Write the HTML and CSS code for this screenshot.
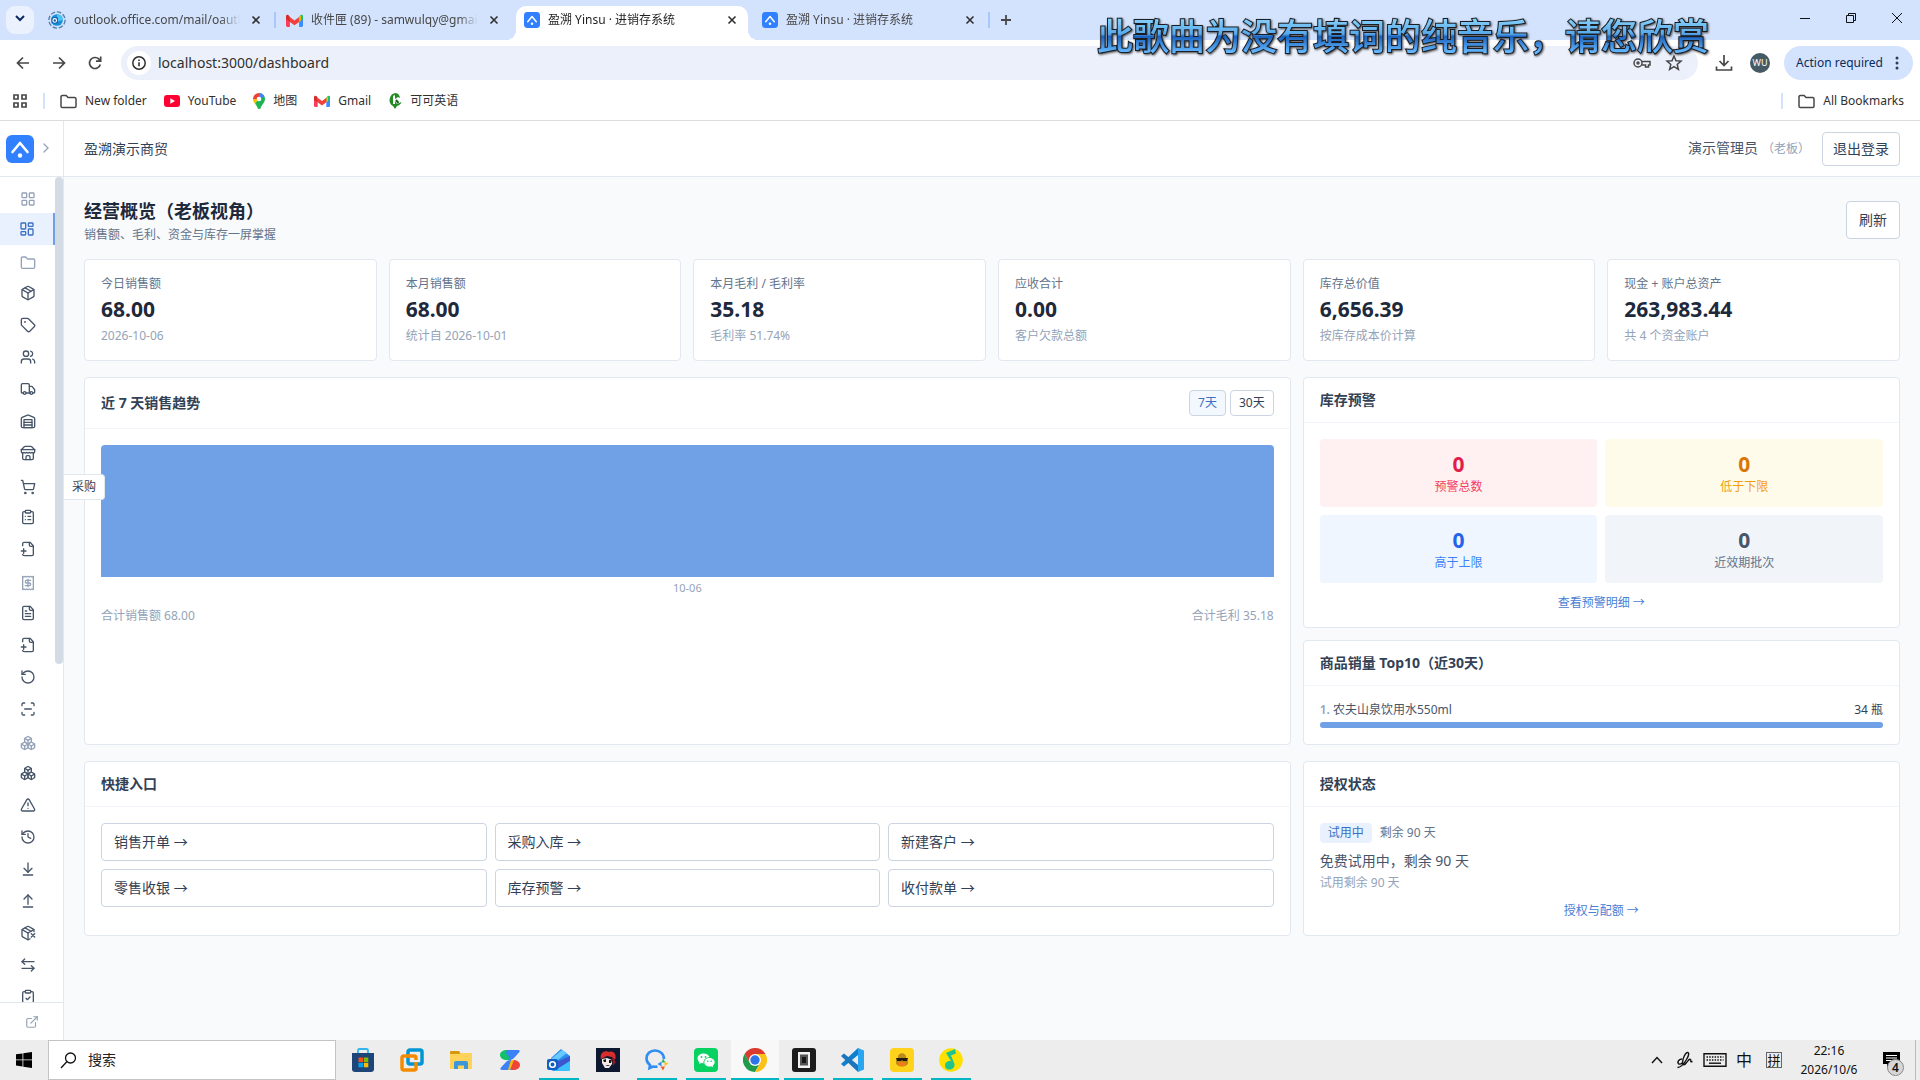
FILE: index.html
```html
<!DOCTYPE html>
<html lang="zh-CN">
<head>
  <meta charset="UTF-8">
  <meta name="viewport" content="width=device-width, initial-scale=1.0">
  <title>盈溯 Yinsu · 进销存系统</title>
  <link rel="stylesheet" href="styles.css">
</head>
<body>

  <!-- Icon sprite -->
  <svg width="0" height="0" class="sprite" aria-hidden="true">
    <defs>
      <linearGradient id="lyric-fill" x1="0" y1="0" x2="0" y2="1">
        <stop offset="0.2" stop-color="#86d2fb"/>
        <stop offset="0.5" stop-color="#58a8ea"/>
        <stop offset="0.55" stop-color="#1c62bd"/>
        <stop offset="0.85" stop-color="#64b8ff"/>
      </linearGradient>
      <symbol id="i-logo" viewBox="0 0 28 28"><rect width="28" height="28" rx="6" fill="#3080ff"/><path d="M6.5 17 14 8l7.5 9" fill="none" stroke="#fff" stroke-width="2.6" stroke-linecap="round" stroke-linejoin="round"/><circle cx="14" cy="20.5" r="2.2" fill="#fff"/></symbol>
      <symbol id="i-x" viewBox="0 0 16 16"><path d="M4.5 4.5l7 7M11.5 4.5l-7 7"/></symbol>
      <symbol id="i-gmail" viewBox="0 0 24 18"><path d="M2 18h3.5V7L0 3v13a2 2 0 0 0 2 2z" fill="#ff3b5c"/><path d="M18.5 18H22a2 2 0 0 0 2-2V3l-5.5 4z" fill="#3b8cff"/><path d="M24 3v4l-5.5 4V4l1.2-1.7C21.5 0 24 1 24 3z" fill="#19c26b"/><path d="M18.5 4v7l2.5-1.8V1.5z" fill="#fbbc04"/><path d="M5.5 11V4l6.5 4.9L18.5 4v7L12 15.8z" fill="#f2413a"/><path d="M0 3v4l5.5 4V4L4.3 2.3C2.5 0 0 1 0 3z" fill="#d42b2b"/></symbol>
      <symbol id="i-folder-o" viewBox="0 0 18 16"><path d="M1 13V3a1.5 1.5 0 0 1 1.5-1.5H6.5l2 2.2h7A1.5 1.5 0 0 1 17 5.2V13a1.5 1.5 0 0 1-1.5 1.5h-13A1.5 1.5 0 0 1 1 13z" fill="none" stroke="#474747" stroke-width="1.6"/></symbol>

      <symbol id="i-grid" viewBox="0 0 24 24"><rect x="3" y="3" width="7" height="7" rx="1"/><rect x="14" y="3" width="7" height="7" rx="1"/><rect x="14" y="14" width="7" height="7" rx="1"/><rect x="3" y="14" width="7" height="7" rx="1"/></symbol>
      <symbol id="i-dashboard" viewBox="0 0 24 24"><rect x="3" y="3" width="7" height="9" rx="1"/><rect x="14" y="3" width="7" height="5" rx="1"/><rect x="14" y="12" width="7" height="9" rx="1"/><rect x="3" y="16" width="7" height="5" rx="1"/></symbol>
      <symbol id="i-folder" viewBox="0 0 24 24"><path d="M20 20a2 2 0 0 0 2-2V8a2 2 0 0 0-2-2h-7.9a2 2 0 0 1-1.69-.9L9.6 3.9A2 2 0 0 0 7.93 3H4a2 2 0 0 0-2 2v13a2 2 0 0 0 2 2Z"/></symbol>
      <symbol id="i-package" viewBox="0 0 24 24"><path d="M11 21.73a2 2 0 0 0 2 0l7-4A2 2 0 0 0 21 16V8a2 2 0 0 0-1-1.73l-7-4a2 2 0 0 0-2 0l-7 4A2 2 0 0 0 3 8v8a2 2 0 0 0 1 1.73z"/><path d="M12 22V12"/><path d="m3.3 7 8.7 5 8.7-5"/><path d="m7.5 4.27 9 5.15"/></symbol>
      <symbol id="i-tag" viewBox="0 0 24 24"><path d="M12.586 2.586A2 2 0 0 0 11.172 2H4a2 2 0 0 0-2 2v7.172a2 2 0 0 0 .586 1.414l8.704 8.704a2.426 2.426 0 0 0 3.42 0l6.58-6.58a2.426 2.426 0 0 0 0-3.42z"/><circle cx="7.5" cy="7.5" r=".5"/></symbol>
      <symbol id="i-users" viewBox="0 0 24 24"><path d="M16 21v-2a4 4 0 0 0-4-4H6a4 4 0 0 0-4 4v2"/><circle cx="9" cy="7" r="4"/><path d="M22 21v-2a4 4 0 0 0-3-3.87"/><path d="M16 3.13a4 4 0 0 1 0 7.75"/></symbol>
      <symbol id="i-truck" viewBox="0 0 24 24"><path d="M14 18V6a2 2 0 0 0-2-2H4a2 2 0 0 0-2 2v11a1 1 0 0 0 1 1h2"/><path d="M15 18H9"/><path d="M19 18h2a1 1 0 0 0 1-1v-3.65a1 1 0 0 0-.22-.624l-3.48-4.35A1 1 0 0 0 17.52 8H14"/><circle cx="17" cy="18" r="2"/><circle cx="7" cy="18" r="2"/></symbol>
      <symbol id="i-warehouse" viewBox="0 0 24 24"><path d="M22 8.35V20a2 2 0 0 1-2 2H4a2 2 0 0 1-2-2V8.35A2 2 0 0 1 3.26 6.5l8-3.2a2 2 0 0 1 1.48 0l8 3.2A2 2 0 0 1 22 8.35Z"/><path d="M6 18h12"/><path d="M6 14h12"/><rect x="6" y="10" width="12" height="12"/></symbol>
      <symbol id="i-store" viewBox="0 0 24 24"><path d="m2 7 4.41-4.41A2 2 0 0 1 7.83 2h8.34a2 2 0 0 1 1.42.59L22 7"/><path d="M4 12v8a2 2 0 0 0 2 2h12a2 2 0 0 0 2-2v-8"/><path d="M15 22v-4a2 2 0 0 0-2-2h-2a2 2 0 0 0-2 2v4"/><path d="M2 7h20"/><path d="M22 7v3a2 2 0 0 1-2 2 2.7 2.7 0 0 1-1.59-.63.7.7 0 0 0-.82 0A2.7 2.7 0 0 1 16 12a2.7 2.7 0 0 1-1.59-.63.7.7 0 0 0-.82 0A2.7 2.7 0 0 1 12 12a2.7 2.7 0 0 1-1.59-.63.7.7 0 0 0-.82 0A2.7 2.7 0 0 1 8 12a2.7 2.7 0 0 1-1.59-.63.7.7 0 0 0-.82 0A2.7 2.7 0 0 1 4 12a2 2 0 0 1-2-2V7"/></symbol>
      <symbol id="i-cart" viewBox="0 0 24 24"><circle cx="8" cy="21" r="1"/><circle cx="19" cy="21" r="1"/><path d="M2.05 2.05h2l2.66 12.42a2 2 0 0 0 2 1.58h9.78a2 2 0 0 0 1.95-1.57l1.65-7.43H5.12"/></symbol>
      <symbol id="i-clip-list" viewBox="0 0 24 24"><rect x="8" y="2" width="8" height="4" rx="1"/><path d="M16 4h2a2 2 0 0 1 2 2v14a2 2 0 0 1-2 2H6a2 2 0 0 1-2-2V6a2 2 0 0 1 2-2h2"/><path d="M12 11h4"/><path d="M12 16h4"/><path d="M8 11h.01"/><path d="M8 16h.01"/></symbol>
      <symbol id="i-clip-check" viewBox="0 0 24 24"><rect x="8" y="2" width="8" height="4" rx="1"/><path d="M16 4h2a2 2 0 0 1 2 2v14a2 2 0 0 1-2 2H6a2 2 0 0 1-2-2V6a2 2 0 0 1 2-2h2"/><path d="m9 14 2 2 4-4"/></symbol>
      <symbol id="i-file-in" viewBox="0 0 24 24"><path d="M14 2v4a2 2 0 0 0 2 2h4"/><path d="M4 7V4a2 2 0 0 1 2-2h9l5 5v13a2 2 0 0 1-2 2H6a2 2 0 0 1-2-2"/><path d="M2 15h7"/><path d="M5.5 11.5v7"/></symbol>
      <symbol id="i-receipt" viewBox="0 0 24 24"><path d="M4 2v20l2-1 2 1 2-1 2 1 2-1 2 1 2-1 2 1V2l-2 1-2-1-2 1-2-1-2 1-2-1-2 1Z"/><path d="M16 8h-6a2 2 0 1 0 0 4h4a2 2 0 1 1 0 4H8"/><path d="M12 17.5v-11"/></symbol>
      <symbol id="i-file-text" viewBox="0 0 24 24"><path d="M15 2H6a2 2 0 0 0-2 2v16a2 2 0 0 0 2 2h12a2 2 0 0 0 2-2V7Z"/><path d="M14 2v4a2 2 0 0 0 2 2h4"/><path d="M10 9H8"/><path d="M16 13H8"/><path d="M16 17H8"/></symbol>
      <symbol id="i-rotate" viewBox="0 0 24 24"><path d="M3 12a9 9 0 1 0 9-9 9.75 9.75 0 0 0-6.74 2.74L3 8"/><path d="M3 3v5h5"/></symbol>
      <symbol id="i-scan" viewBox="0 0 24 24"><path d="M3 7V5a2 2 0 0 1 2-2h2"/><path d="M17 3h2a2 2 0 0 1 2 2v2"/><path d="M21 17v2a2 2 0 0 1-2 2h-2"/><path d="M7 21H5a2 2 0 0 1-2-2v-2"/><path d="M7 12h10"/></symbol>
      <symbol id="i-boxes" viewBox="0 0 24 24"><path d="M2.97 12.92A2 2 0 0 0 2 14.63v3.24a2 2 0 0 0 .97 1.71l3 1.8a2 2 0 0 0 2.06 0L12 19v-5.5l-5-3-4.03 2.42Z"/><path d="m7 16.5-4.74-2.85"/><path d="m7 16.5 5-3"/><path d="M7 16.5v5.17"/><path d="M12 13.5V19l3.97 2.38a2 2 0 0 0 2.06 0l3-1.8a2 2 0 0 0 .97-1.71v-3.24a2 2 0 0 0-.97-1.71L17 10.5l-5 3Z"/><path d="m17 16.5-5-3"/><path d="m17 16.5 4.74-2.85"/><path d="M17 16.5v5.17"/><path d="M7.97 4.42A2 2 0 0 0 7 6.13v4.37l5 3 5-3V6.13a2 2 0 0 0-.97-1.71l-3-1.8a2 2 0 0 0-2.06 0l-3 1.8Z"/><path d="M12 8 7.26 5.15"/><path d="m12 8 4.74-2.85"/><path d="M12 13.5V8"/></symbol>
      <symbol id="i-alert" viewBox="0 0 24 24"><path d="m21.73 18-8-14a2 2 0 0 0-3.48 0l-8 14A2 2 0 0 0 4 21h16a2 2 0 0 0 1.73-3"/><path d="M12 9v4"/><path d="M12 17h.01"/></symbol>
      <symbol id="i-history" viewBox="0 0 24 24"><path d="M3 12a9 9 0 1 0 9-9 9.75 9.75 0 0 0-6.74 2.74L3 8"/><path d="M3 3v5h5"/><path d="M12 7v5l4 2"/></symbol>
      <symbol id="i-down" viewBox="0 0 24 24"><path d="M12 17V3"/><path d="m6 11 6 6 6-6"/><path d="M19 21H5"/></symbol>
      <symbol id="i-up" viewBox="0 0 24 24"><path d="m18 9-6-6-6 6"/><path d="M12 3v14"/><path d="M5 21h14"/></symbol>
      <symbol id="i-package-x" viewBox="0 0 24 24"><path d="M21 10V8a2 2 0 0 0-1-1.73l-7-4a2 2 0 0 0-2 0l-7 4A2 2 0 0 0 3 8v8a2 2 0 0 0 1 1.73l7 4a2 2 0 0 0 2 0l2-1.14"/><path d="m7.5 4.27 9 5.15"/><path d="M3.29 7 12 12l8.71-5"/><path d="M12 22V12"/><path d="m17 13 5 5m-5 0 5-5"/></symbol>
      <symbol id="i-swap" viewBox="0 0 24 24"><path d="M7 3 3 7l4 4"/><path d="M3 7h18"/><path d="m17 21 4-4-4-4"/><path d="M21 17H3"/></symbol>
      <symbol id="i-external" viewBox="0 0 24 24"><path d="M15 3h6v6"/><path d="M10 14 21 3"/><path d="M18 13v6a2 2 0 0 1-2 2H5a2 2 0 0 1-2-2V8a2 2 0 0 1 2-2h6"/></symbol>
    </defs>
  </svg>

  <!-- Browser window -->
  <header class="browser">
    <div class="tabstrip">
      <button class="tab-search" aria-label="搜索标签页"><svg width="12" height="12" viewBox="0 0 12 12"><path d="M2 4l4 4 4-4" fill="none" stroke="#0a2a5e" stroke-width="2"/></svg></button>
      <div class="tab">
        <svg class="tab-icon" width="18" height="18" viewBox="0 0 20 20"><circle cx="10" cy="10" r="9" fill="none" stroke="#4f7fae" stroke-width="1.5" stroke-dasharray="5 2"/><circle cx="10" cy="10" r="6.5" fill="#1590d8"/><path d="M10 3.5a6.5 6.5 0 0 1 6.5 6.5L10 12z" fill="#4cc3f5"/><rect x="4" y="7" width="7" height="7" rx="1" fill="#0f5ea8"/><circle cx="7.5" cy="10.5" r="2" fill="none" stroke="#fff" stroke-width="1.3"/></svg>
        <span class="tab-title">outlook.office.com/mail/oauth</span>
        <button class="tab-close" aria-label="关闭"><svg width="16" height="16"><use href="#i-x"/></svg></button>
      </div>
      <div class="tab divided">
        <svg class="tab-icon" width="17" height="13"><use href="#i-gmail"/></svg>
        <span class="tab-title">收件匣 (89) - samwulqy@gmail.com</span>
        <button class="tab-close" aria-label="关闭"><svg width="16" height="16"><use href="#i-x"/></svg></button>
      </div>
      <div class="tab active">
        <svg class="tab-icon" width="16" height="16"><use href="#i-logo"/></svg>
        <span class="tab-title">盈溯 Yinsu · 进销存系统</span>
        <button class="tab-close" aria-label="关闭"><svg width="16" height="16"><use href="#i-x"/></svg></button>
      </div>
      <div class="tab">
        <svg class="tab-icon" width="16" height="16"><use href="#i-logo"/></svg>
        <span class="tab-title">盈溯 Yinsu · 进销存系统</span>
        <button class="tab-close" aria-label="关闭"><svg width="16" height="16"><use href="#i-x"/></svg></button>
      </div>
      <button class="new-tab divided" aria-label="新标签页"><svg width="14" height="14" viewBox="0 0 14 14"><path d="M7 2v10M2 7h10" stroke="#474747" stroke-width="1.8"/></svg></button>
      <div class="window-buttons">
        <button aria-label="最小化"><svg width="12" height="12" viewBox="0 0 12 12"><path d="M1 6.5h10"/></svg></button>
        <button aria-label="还原"><svg width="12" height="12" viewBox="0 0 12 12"><path d="M1.5 3.5h7v7h-7zM3.5 3.5v-2h7v7h-2"/></svg></button>
        <button aria-label="关闭窗口"><svg width="12" height="12" viewBox="0 0 12 12"><path d="M1 1l10 10M11 1L1 11"/></svg></button>
      </div>
    </div>

    <div class="toolbar">
      <button class="nav-btn" aria-label="后退"><svg width="16" height="16" viewBox="0 0 16 16"><path d="M14 8H3M8 2.5L2.5 8 8 13.5"/></svg></button>
      <button class="nav-btn" aria-label="前进"><svg width="16" height="16" viewBox="0 0 16 16"><path d="M2 8h11M8 2.5L13.5 8 8 13.5"/></svg></button>
      <button class="nav-btn" aria-label="刷新页面"><svg width="16" height="16" viewBox="0 0 16 16"><path d="M13.3 9.5A5.5 5.5 0 1 1 12 4.2L13.5 6M13.7 1.5V6.2H9"/></svg></button>
      <div class="omnibox">
        <button class="site-info" aria-label="网站信息"><svg width="16" height="16" viewBox="0 0 16 16"><circle cx="8" cy="8" r="6.2" fill="none" stroke="#303030" stroke-width="1.5"/><path d="M8 7.3v4M8 4.5v1.5" stroke="#303030" stroke-width="1.6"/></svg></button>
        <input type="text" class="address" aria-label="地址栏" value="localhost:3000/dashboard">
        <svg width="18" height="18" viewBox="0 0 18 18" class="line-icon"><circle cx="5" cy="9" r="4"/><circle cx="5" cy="9" r="1"/><path d="M9 7.5h8v3.5h-1.5v2h-3v-2H9"/></svg>
        <svg width="18" height="18" viewBox="0 0 18 18" class="line-icon"><path d="M9 2l2 4.7 5 .4-3.8 3.3 1.2 5L9 12.7l-4.4 2.7 1.2-5L2 7.1l5-.4z"/></svg>
      </div>
      <button class="nav-btn" aria-label="下载"><svg width="18" height="18" viewBox="0 0 18 18"><path d="M9 1v10M4.5 7L9 11.5 13.5 7M1.5 12.5V16h15v-3.5"/></svg></button>
      <button class="avatar">WU</button>
      <button class="action">Action required <svg width="4" height="16" viewBox="0 0 4 16" fill="#303c55"><circle cx="2" cy="3" r="1.5"/><circle cx="2" cy="8" r="1.5"/><circle cx="2" cy="13" r="1.5"/></svg></button>
    </div>

    <nav class="bookmarks">
      <a href="#" class="apps" aria-label="应用"><svg width="14" height="14" viewBox="0 0 14 14" fill="none" stroke="#474747" stroke-width="1.7"><path d="M1 1h4v4H1zM9 1h4v4H9zM1 9h4v4H1zM9 9h4v4H9z"/></svg></a>
      <a href="#" class="divided"><svg width="17" height="15"><use href="#i-folder-o"/></svg>New folder</a>
      <a href="#"><svg width="16" height="12" viewBox="0 0 16 12"><rect width="16" height="12" rx="3" fill="#f03"/><path d="M6.3 3.3v5.4L11 6z" fill="#fff"/></svg>YouTube</a>
      <a href="#"><svg width="12" height="16" viewBox="0 0 12 16"><path d="M6 0a6 6 0 0 1 6 6c0 3.5-3 5-4.5 9.5H6z" fill="#1fb254"/><path d="M6 0a6 6 0 0 0-6 6l6 0z" fill="#ea4335"/><path d="M0 6c0 2 1 3.500 2 4.600L6 6z" fill="#fbbc04"/><path d="M2 10.600C3.200 12.200 4 13.500 4.800 15.500c.4.700 2 .7 2.500-.5L6 6z" fill="#22b553"/><path d="M6 0a6 6 0 0 1 5.500 3.600L6 6z" fill="#4285f4"/><circle cx="6" cy="6" r="2.300" fill="#fff"/></svg>地图</a>
      <a href="#"><svg width="16" height="12"><use href="#i-gmail"/></svg>Gmail</a>
      <a href="#"><svg width="14" height="16" viewBox="0 0 14 16"><path d="M8 0a7 7 0 0 0-3 13l2 3 2-3c2-.5 4-2 4.500-4L9 11 7 8v3H5V3l2-1v4l3-2 2 1A6 6 0 0 0 8 0z" fill="#228b22"/><path d="M8 7l2.500 3" stroke="#14651a" stroke-width="2"/></svg>可可英语</a>
      <a href="#" class="all divided"><svg width="17" height="15"><use href="#i-folder-o"/></svg>All Bookmarks</a>
    </nav>

    <!-- Floating desktop lyrics -->
    <svg class="lyrics" width="620" height="50"><text x="4" y="36">此歌曲为没有填词的纯音乐，请您欣赏</text></svg>
  </header>

  <div class="app">
    <aside class="sidebar">
      <div class="brand">
        <svg width="28" height="28"><use href="#i-logo"/></svg>
        <button class="expand" aria-label="展开菜单"><svg width="8" height="12" viewBox="0 0 8 12"><path d="M2 2l4 4-4 4" fill="none" stroke="#94a3b8" stroke-width="1.3" stroke-linecap="round"/></svg></button>
      </div>
      <div class="menu-wrap">
        <nav class="menu">
          <span class="group"><svg><use href="#i-grid"/></svg></span>
          <a href="#" class="active" aria-label="经营概览"><svg><use href="#i-dashboard"/></svg></a>
          <span class="group"><svg><use href="#i-folder"/></svg></span>
          <a href="#" aria-label="商品"><svg><use href="#i-package"/></svg></a>
          <a href="#" aria-label="分类"><svg><use href="#i-tag"/></svg></a>
          <a href="#" aria-label="客户"><svg><use href="#i-users"/></svg></a>
          <a href="#" aria-label="供应商"><svg><use href="#i-truck"/></svg></a>
          <a href="#" aria-label="仓库"><svg><use href="#i-warehouse"/></svg></a>
          <a href="#" aria-label="门店"><svg><use href="#i-store"/></svg></a>
          <span class="group hover"><svg><use href="#i-cart"/></svg><span class="tip">采购</span></span>
          <a href="#" aria-label="采购订单"><svg><use href="#i-clip-list"/></svg></a>
          <a href="#" aria-label="采购入库"><svg><use href="#i-file-in"/></svg></a>
          <span class="group"><svg><use href="#i-receipt"/></svg></span>
          <a href="#" aria-label="销售单"><svg><use href="#i-file-text"/></svg></a>
          <a href="#" aria-label="销售开单"><svg><use href="#i-file-in"/></svg></a>
          <a href="#" aria-label="退货"><svg><use href="#i-rotate"/></svg></a>
          <a href="#" aria-label="零售收银"><svg><use href="#i-scan"/></svg></a>
          <span class="group"><svg><use href="#i-boxes"/></svg></span>
          <a href="#" aria-label="库存"><svg><use href="#i-boxes"/></svg></a>
          <a href="#" aria-label="库存预警"><svg><use href="#i-alert"/></svg></a>
          <a href="#" aria-label="库存流水"><svg><use href="#i-history"/></svg></a>
          <a href="#" aria-label="入库"><svg><use href="#i-down"/></svg></a>
          <a href="#" aria-label="出库"><svg><use href="#i-up"/></svg></a>
          <a href="#" aria-label="报损"><svg><use href="#i-package-x"/></svg></a>
          <a href="#" aria-label="调拨"><svg><use href="#i-swap"/></svg></a>
          <a href="#" aria-label="盘点"><svg><use href="#i-clip-check"/></svg></a>
        </nav>
        <div class="scrollbar"></div>
      </div>
      <a href="#" class="side-foot" aria-label="新窗口打开"><svg><use href="#i-external"/></svg></a>
    </aside>

    <div class="page">
      <header class="topbar">
        <span class="company">盈溯演示商贸</span>
        <span class="user">演示管理员<small>（老板）</small></span>
        <button class="btn">退出登录</button>
      </header>

      <main class="content">
        <div class="page-head">
          <div>
            <h1>经营概览（老板视角）</h1>
            <p>销售额、毛利、资金与库存一屏掌握</p>
          </div>
          <button class="btn large">刷新</button>
        </div>

        <section class="stats">
          <div class="card stat"><span>今日销售额</span><strong>68.00</strong><small>2026-10-06</small></div>
          <div class="card stat"><span>本月销售额</span><strong>68.00</strong><small>统计自 2026-10-01</small></div>
          <div class="card stat"><span>本月毛利 / 毛利率</span><strong>35.18</strong><small>毛利率 51.74%</small></div>
          <div class="card stat"><span>应收合计</span><strong>0.00</strong><small>客户欠款总额</small></div>
          <div class="card stat"><span>库存总价值</span><strong>6,656.39</strong><small>按库存成本价计算</small></div>
          <div class="card stat"><span>现金 + 账户总资产</span><strong>263,983.44</strong><small>共 4 个资金账户</small></div>
        </section>

        <section class="row">
          <div class="card wide">
            <div class="card-head">
              <h2>近 7 天销售趋势</h2>
              <div class="range">
                <button class="on">7天</button>
                <button>30天</button>
              </div>
            </div>
            <div class="card-body">
              <div class="chart">
                <div class="bar" style="height: 100%"></div>
              </div>
              <div class="axis">10-06</div>
              <div class="totals"><span>合计销售额 68.00</span><span>合计毛利 35.18</span></div>
            </div>
          </div>

          <div class="stack">
            <div class="card">
              <div class="card-head"><h2>库存预警</h2></div>
              <div class="card-body">
                <div class="alerts">
                  <div class="alert red"><strong>0</strong><span>预警总数</span></div>
                  <div class="alert amber"><strong>0</strong><span>低于下限</span></div>
                  <div class="alert blue"><strong>0</strong><span>高于上限</span></div>
                  <div class="alert gray"><strong>0</strong><span>近效期批次</span></div>
                </div>
                <a href="#" class="more">查看预警明细 →</a>
              </div>
            </div>
            <div class="card">
              <div class="card-head"><h2>商品销量 Top10（近30天）</h2></div>
              <div class="card-body">
                <div class="rank"><span><b>1.</b> 农夫山泉饮用水550ml</span><em>34 瓶</em></div>
                <div class="track"><div class="fill" style="width: 100%"></div></div>
              </div>
            </div>
          </div>
        </section>

        <section class="row">
          <div class="card wide">
            <div class="card-head"><h2>快捷入口</h2></div>
            <div class="card-body shortcuts">
              <a href="#">销售开单 →</a>
              <a href="#">采购入库 →</a>
              <a href="#">新建客户 →</a>
              <a href="#">零售收银 →</a>
              <a href="#">库存预警 →</a>
              <a href="#">收付款单 →</a>
            </div>
          </div>
          <div class="card">
            <div class="card-head"><h2>授权状态</h2></div>
            <div class="card-body">
              <div class="license"><span class="badge">试用中</span><span>剩余 90 天</span></div>
              <p class="license-text">免费试用中，剩余 90 天</p>
              <p class="license-note">试用剩余 90 天</p>
              <a href="#" class="more">授权与配额 →</a>
            </div>
          </div>
        </section>
      </main>
    </div>
  </div>

  <!-- Windows taskbar -->
  <footer class="taskbar">
    <button class="start" aria-label="开始"><svg width="16" height="16" viewBox="0 0 16 16"><path d="M0 2.3L6.5 1.4v6.1H0zM7.3 1.3L16 0v7.5H7.3zM0 8.3h6.5v6.2L0 13.6zM7.3 8.3H16V16l-8.7-1.2z"/></svg></button>
    <label class="search">
      <svg width="17" height="17" viewBox="0 0 17 17" fill="none" stroke="#111" stroke-width="1.3"><circle cx="10.5" cy="6" r="5"/><path d="M7 9.5L1 16"/></svg>
      <input type="text" placeholder="搜索" aria-label="搜索">
    </label>
    <div class="tasks">
      <button aria-label="Store"><svg viewBox="0 0 24 24"><path d="M7 6V2.5A1.5 1.5 0 0 1 8.500 1h7A1.500 1.500 0 0 1 17 2.500V6" fill="none" stroke="#35b5ee" stroke-width="1.8"/><path d="M1 5h22v16a3 3 0 0 1-3 3H4a3 3 0 0 1-3-3z" fill="#1d4577"/><path d="M7.500 9.500H12V14H7.500z" fill="#f25022"/><path d="M12.800 9.500h4.500V14h-4.500z" fill="#7fba00"/><path d="M7.500 14.800H12v4.500H7.500z" fill="#00a4ef"/><path d="M12.800 14.800h4.500v4.500h-4.500z" fill="#ffb900"/></svg></button>
      <button aria-label="VMware"><svg viewBox="0 0 24 24" fill="none" stroke-width="3.5"><rect x="8" y="2" width="14" height="14" rx="2" stroke="#0095d3"/><path d="M10 8H4a2 2 0 0 0-2 2v10a2 2 0 0 0 2 2h10a2 2 0 0 0 2-2v-6" stroke="#f38b00"/><path d="M8 8h6a2 2 0 0 1 2 2v2" stroke="#f38b00"/></svg></button>
      <button aria-label="Explorer"><svg viewBox="0 0 24 24"><path d="M1 4a1 1 0 0 1 1-1h8l2 3H1z" fill="#d9980b"/><path d="M1 6h9l2-1h11v16H1z" fill="#ffd35a"/><path d="M5 21v-6a2 2 0 0 1 2-2h10a2 2 0 0 1 2 2v6h-4v-3.500H9V21z" fill="#3b97d9"/></svg></button>
      <button aria-label="Notes"><svg viewBox="0 0 24 24"><path d="M8 2h12c2 0 2 1.500 1 2.500L16 10c-1.500 1.500-3 2-5 2H8z" fill="#3b82f6"/><path d="M9 2C5 2 2 4 2 7s3 5 7 5c2 0 3-1 2-3L8 5z" fill="#10c06a"/><path d="M16 22H4c-2 0-2-1.500-1-2.500L8 14c1.500-1.500 3-2 5-2h2z" fill="#3b82f6"/><path d="M15 12c4 0 7 2 7 5s-3 5-7 5c-2 0-3-1-2-3z" fill="#ef4438"/><path d="M13 12h3l-4 10h-2z" fill="#fbb80b"/></svg></button>
      <button class="running" aria-label="Outlook"><svg viewBox="0 0 24 24"><path d="M4 10L14 1l9 7v13a2 2 0 0 1-2 2H7a3 3 0 0 1-3-3z" fill="#2a8ff0"/><path d="M4 11L15 2l5 3L8 14z" fill="#67c8ff"/><path d="M23 8v5L9 22l-4-6z" fill="#3e55d0"/><path d="M7 23l16-10v9l-1 1z" fill="#3cc0ff"/><rect x="0" y="11" width="11" height="11" rx="2" fill="#0f5fc4"/><circle cx="5.5" cy="16.5" r="2.8" fill="none" stroke="#fff" stroke-width="1.6"/></svg></button>
      <button aria-label="Game"><svg viewBox="0 0 24 24"><path d="M0 0h24v24H0z" fill="#0d1830"/><path d="M5 11C3 4 10 2 13 4c5-2 8 3 6 8l-3-3-5-1z" fill="#d92c2c"/><path d="M6 11l5-1 5 2v4l-3 4H9l-3-5z" fill="#f3e9e6"/><path d="M7 12l3-1v3H8zM13 12h3l-1 3h-2zM9 17h5l-2 1z" fill="#151515"/><path d="M16 9l4 5-3 4z" fill="#8e1a22"/></svg></button>
      <button class="running" aria-label="WeCom"><svg viewBox="0 0 24 24"><path d="M19 11c0-5-4-8.500-9-8.500S1.500 6 1.500 10.500c0 3 1.500 5 3.500 6.500l-.5 3 3.500-1.500c1.500.4 3 .4 4.500.1" fill="none" stroke="#2f8df5" stroke-width="2.600"/><path d="M18 10.500l2.500 4h-4z" fill="#20b36b"/><path d="M23.500 15.500l-4 2.500v-4.500z" fill="#ffc21a"/><path d="M18 22.500l-2.500-4h4.500z" fill="#f25a2a"/><path d="M12.500 16l4-2.500v5z" fill="#2f8df5"/></svg></button>
      <button class="running" aria-label="WeChat"><svg viewBox="0 0 24 24"><rect width="24" height="24" rx="4" fill="#07d160"/><path d="M9.500 5.500c-3.500 0-6 2.200-6 5 0 1.500.8 2.800 2 3.700L5 16l2.200-1.100c.7.200 1.500.3 2.300.3-.5-3.500 2.500-6 6-6-.7-2.200-3-3.700-6-3.700z" fill="#fff"/><path d="M15.500 10c-3 0-5.200 1.900-5.200 4.300s2.200 4.300 5.200 4.300c.6 0 1.200-.1 1.800-.3l1.900 1-.5-1.700c1.200-.8 2-2 2-3.300 0-2.400-2.300-4.300-5.200-4.300z" fill="#fff"/><g fill="#07d160"><circle cx="7.500" cy="9" r=".9"/><circle cx="11.500" cy="9" r=".9"/><circle cx="13.800" cy="13.200" r=".8"/><circle cx="17.200" cy="13.200" r=".8"/></g></svg></button>
      <button class="running current" aria-label="Chrome"><svg viewBox="0 0 24 24"><path d="M12 6h10.400A12 12 0 0 0 1.600 6L6.800 15z" fill="#dc3a2e"/><path d="M1.600 6A12 12 0 0 0 12 24l5.200-9-10.400 0z" fill="#229a4c"/><path d="M17.200 15L12 24A12 12 0 0 0 22.400 6H12z" fill="#fbc116"/><circle cx="12" cy="12" r="6" fill="#fff"/><circle cx="12" cy="12" r="4.700" fill="#2f74e6"/></svg></button>
      <button class="running" aria-label="Device"><svg viewBox="0 0 24 24"><rect width="24" height="24" rx="3" fill="#1d1d1d"/><path d="M6 4h12v16H6z" fill="#f2f2f2"/><path d="M8 6.500h8v11H8z" fill="#555"/><path d="M10 9h4v6h-4z" fill="#161616"/></svg></button>
      <button class="running" aria-label="VS Code"><svg viewBox="0 0 24 24"><path d="M17 0l6 2.500v19L17 24z" fill="#2aa5ef"/><path d="M17 0v7L3 18.500 0 16z" fill="#0f7fd0"/><path d="M17 24v-7L3 5.500 0 8z" fill="#1b76bd"/></svg></button>
      <button class="running" aria-label="Duck"><svg viewBox="0 0 24 24"><rect width="24" height="24" rx="4" fill="#ffd21c"/><path d="M8 9c0-5 8-5 8 0l2 4c1 4-3 5.500-6 5.500S5 17 6 13z" fill="#b98a1c"/><path d="M6 10h12l-1 3h-4l-1-1-1 1H7z" fill="#20180e"/><path d="M8 15c2.500-1.500 5.500-1.500 8 0 1 2-1.500 3-4 3s-5-1-4-3z" fill="#f57c14"/></svg></button>
      <button class="running" aria-label="QQ Music"><svg viewBox="0 0 24 24"><circle cx="12" cy="12" r="11.800" fill="#ffe100"/><path d="M16 1l-9 4 5 8c-3-.5-6 1-6 4.500C6 21 9 22 11.500 21.500c3-.6 4.500-3 4-5.500L12 7.500l5-2z" fill="#1fc48d"/></svg></button>
    </div>
    <div class="tray">
      <button aria-label="显示隐藏的图标"><svg width="14" height="14" viewBox="0 0 14 14"><path d="M2 10l5-5.500 5 5.500"/></svg></button>
      <button aria-label="手写"><svg width="18" height="18" viewBox="0 0 18 18"><path d="M1.500 16.500c3 0 6-3 9-8s2.500-7 1-7c-2 0-5 6-5 10 0 3 2 3 4 0 2-2 3-4 4-3s-1 3 2 2M6 8c-4 0-5 4-3 5 1.500.5 3-1 3-1"/></svg></button>
      <button class="keyboard" aria-label="触摸键盘"><svg width="24" height="14" viewBox="0 0 24 14"><path d="M1 .7h22v12.600H1z"/><path d="M3.500 4h17M3.500 7h17" stroke-dasharray="1.5 1.2"/><path d="M6 10.200h12"/></svg></button>
      <button class="lang">中</button>
      <button class="ime">拼</button>
      <button class="clock">22:16<br>2026/10/6</button>
      <button class="notice" aria-label="通知"><svg width="17" height="16" viewBox="0 0 17 16"><path d="M0 0h17v12H8l-4 4v-4H0z" fill="#000" stroke="none"/><path d="M3 3.500h11M3 6h11M3 8.500h7" stroke="#fff" stroke-width="1.2"/></svg><span>4</span></button>
    </div>
  </footer>

</body>
</html>
```
FILE: styles.css
```css
* {
  box-sizing: border-box;
  margin: 0;
  padding: 0;
}

body {
  display: flex;
  flex-direction: column;
  height: 100vh;
  overflow: hidden;
  font-family: "Noto Sans", "Noto Sans CJK SC", sans-serif;
  font-size: 14px;
  line-height: 20px;
  color: #334155;
  background: #f8fafc;
}

button, input {
  font: inherit;
  color: inherit;
  border: none;
  background: none;
}

button {
  cursor: pointer;
}

a {
  color: inherit;
  text-decoration: none;
}

svg {
  flex: none;
}

.sprite {
  position: absolute;
}

/* Browser */
.browser {
  position: relative;
  flex: none;
  font-size: 12px;
  line-height: 16px;
  color: #303030;
  background: #fff;
  border-bottom: 1px solid #dcdcdc;
}

.tabstrip {
  display: flex;
  align-items: flex-end;
  gap: 6px;
  height: 40px;
  padding-left: 6px;
  background: #d3e3fd;
}

.tab-search {
  align-self: center;
  width: 28px;
  height: 28px;
  border-radius: 9px;
  background: #ebf2fe;
}

.tab {
  position: relative;
  display: flex;
  align-items: center;
  gap: 8px;
  width: 232px;
  height: 34px;
  padding: 0 8px 6px;
  color: #474747;
}

.tab.active {
  color: #1f1f1f;
  background: #fff;
  border-radius: 10px 10px 0 0;
}

.tab.active::before,
.tab.active::after {
  content: "";
  position: absolute;
  bottom: 0;
  width: 10px;
  height: 10px;
}

.tab.active::before {
  left: -10px;
  background: radial-gradient(circle at 0 0, transparent 10px, #fff 10px);
}

.tab.active::after {
  right: -10px;
  background: radial-gradient(circle at 100% 0, transparent 10px, #fff 10px);
}

.tab-title {
  flex: 1;
  overflow: hidden;
  white-space: nowrap;
  -webkit-mask-image: linear-gradient(to right, #000 88%, transparent);
  mask-image: linear-gradient(to right, #000 88%, transparent);
}

.tab-close {
  width: 16px;
  height: 16px;
  stroke: #303030;
  stroke-width: 1.6;
}

.divided::before {
  content: "";
  position: absolute;
  left: -4px;
  width: 2px;
  height: 16px;
  background: #a8c7fa;
}

.new-tab {
  position: relative;
  display: flex;
  align-items: center;
  height: 34px;
  padding: 0 7px 6px;
}

.window-buttons {
  display: flex;
  align-self: stretch;
  margin-left: auto;
}

.window-buttons button {
  width: 46px;
  fill: none;
  stroke: #111;
}

.toolbar {
  display: flex;
  align-items: center;
  gap: 8px;
  height: 46px;
  padding: 0 7px 0 9px;
}

.nav-btn {
  display: flex;
  justify-content: center;
  align-items: center;
  width: 28px;
  height: 28px;
  fill: none;
  stroke: #474747;
  stroke-width: 1.7;
}

.omnibox {
  display: flex;
  flex: 1;
  align-items: center;
  gap: 14px;
  height: 34px;
  margin: 0 4px;
  padding: 0 15px 0 6px;
  border-radius: 17px;
  background: #ecf0fa;
}

.site-info {
  display: flex;
  justify-content: center;
  align-items: center;
  width: 24px;
  height: 24px;
  border-radius: 50%;
  background: #fff;
}

.address {
  flex: 1;
  margin-left: -7px;
  font-size: 14px;
}

.line-icon {
  fill: none;
  stroke: #474747;
  stroke-width: 1.5;
}

.avatar {
  width: 20px;
  height: 20px;
  margin: 0 6px 0 4px;
  border-radius: 50%;
  font-size: 9px;
  color: #fff;
  background: #455a64;
}

.action {
  display: flex;
  align-items: center;
  gap: 12px;
  height: 34px;
  padding: 0 14px 0 12px;
  border-radius: 17px;
  color: #0a2a5e;
  background: #d3e3fd;
}

.bookmarks {
  display: flex;
  align-items: center;
  gap: 17px;
  height: 34px;
  padding: 0 16px 4px 13px;
}

.bookmarks a {
  position: relative;
  display: flex;
  align-items: center;
  gap: 8px;
}

.bookmarks .divided {
  margin-left: 16px;
}

.bookmarks .divided::before {
  left: -17px;
  background: #d3e3fd;
}

.bookmarks .all {
  margin-left: auto;
}

.lyrics {
  position: absolute;
  top: 14px;
  right: 207px;
  z-index: 5;
  overflow: visible;
  font-family: "Noto Sans CJK SC", sans-serif;
  font-size: 36px;
  font-weight: 500;
  fill: url(#lyric-fill);
  stroke: #1b1d22;
  stroke-width: 2px;
  paint-order: stroke;
  filter: drop-shadow(1px 1px 1px #444);
}

/* App shell */
.app {
  display: flex;
  flex: 1;
  min-height: 0;
}

.sidebar {
  position: relative;
  display: flex;
  flex-direction: column;
  flex: none;
  width: 64px;
  background: #fff;
  border-right: 1px solid #e2e8f0;
}

.sidebar a svg,
.sidebar .group svg {
  width: 16px;
  height: 16px;
  fill: none;
  stroke: currentColor;
  stroke-width: 2;
  stroke-linecap: round;
  stroke-linejoin: round;
}

.brand {
  display: flex;
  align-items: center;
  gap: 8px;
  height: 56px;
  padding-left: 6px;
  border-bottom: 1px solid #e2e8f0;
}

.menu-wrap {
  display: flex;
  flex: 1;
  min-height: 0;
}

.menu {
  flex: 1;
  padding-top: 8px;
  overflow: hidden;
}

.menu a,
.menu .group {
  display: flex;
  justify-content: center;
  align-items: center;
  height: 32px;
  color: #475569;
}

.menu .group {
  height: 28px;
  color: #94a3b8;
}

.menu .group.hover {
  color: #475569;
}

.menu a + .group {
  margin-top: 4px;
}

.menu a.active {
  color: #3b6fc4;
  background: #e8f1fd;
  border-right: 2px solid #6fa1e7;
}

.tip {
  position: absolute;
  left: 64px;
  z-index: 3;
  padding: 4px 8px;
  font-size: 12px;
  line-height: 16px;
  white-space: nowrap;
  color: #334155;
  background: #fff;
  border: 1px solid #e2e8f0;
  border-left: none;
  border-radius: 0 4px 4px 0;
}

.scrollbar {
  width: 8px;
  height: 59%;
  border-radius: 4px;
  background: #d3dbe4;
}

.side-foot {
  display: flex;
  justify-content: center;
  align-items: center;
  height: 38px;
  color: #94a3b8;
  border-top: 1px solid #e2e8f0;
}

.sidebar .side-foot svg {
  width: 14px;
  height: 14px;
}

.page {
  flex: 1;
  min-width: 0;
}

.topbar {
  display: flex;
  align-items: center;
  gap: 12px;
  height: 56px;
  padding: 0 20px;
  background: #fff;
  border-bottom: 1px solid #e2e8f0;
}

.company {
  margin-right: auto;
}

.user {
  display: flex;
  align-items: baseline;
  gap: 4px;
  color: #475569;
}

.user small {
  font-size: 12px;
  color: #94a3b8;
}

.btn {
  height: 34px;
  padding: 0 10px;
  color: #334155;
  background: #fff;
  border: 1px solid #cbd5e1;
  border-radius: 4px;
}

.btn.large {
  height: 38px;
  padding: 0 12px;
}

/* Dashboard */
.content {
  display: flex;
  flex-direction: column;
  gap: 16px;
  padding: 20px;
}

.page-head {
  display: flex;
  justify-content: space-between;
  align-items: center;
}

h1 {
  font-size: 18px;
  line-height: 28px;
  color: #1e293b;
}

.page-head p {
  margin-top: 2px;
  font-size: 12px;
  line-height: 16px;
  color: #64748b;
}

.card {
  background: #fff;
  border: 1px solid #e2e8f0;
  border-radius: 4px;
}

.stats {
  display: grid;
  grid-template-columns: repeat(6, 1fr);
  gap: 12px;
}

.stat {
  display: flex;
  flex-direction: column;
  gap: 4px;
  padding: 16px;
  font-size: 12px;
  line-height: 16px;
  color: #64748b;
}

.stat strong,
.alert strong {
  margin-bottom: 2px;
  font-size: 21px;
  line-height: 26px;
  font-weight: 700;
}

.stat strong {
  color: #1e293b;
}

.stat small {
  font-size: 12px;
  color: #94a3b8;
}

.row {
  display: grid;
  grid-template-columns: repeat(3, 1fr);
  gap: 12px;
}

.wide {
  grid-column: span 2;
}

.stack {
  display: flex;
  flex-direction: column;
  gap: 12px;
}

.card-head {
  display: flex;
  justify-content: space-between;
  align-items: center;
  padding: 12px 16px;
  border-bottom: 1px solid #f1f5f9;
}

h2 {
  font-size: 14px;
  line-height: 20px;
  font-weight: 700;
  color: #334155;
}

.card-body {
  padding: 16px;
  font-size: 12px;
  line-height: 16px;
}

.range {
  display: flex;
  gap: 4px;
}

.range button {
  height: 26px;
  padding: 0 8px;
  font-size: 12px;
  border: 1px solid #cbd5e1;
  border-radius: 4px;
}

.range button.on {
  color: #3b6fc4;
  background: #f3f7fe;
}

.chart {
  display: flex;
  align-items: flex-end;
  height: 132px;
}

.bar {
  flex: 1;
  background: #70a1e7;
  border-radius: 4px 4px 0 0;
}

.axis {
  margin-top: 3px;
  font-size: 11px;
  text-align: center;
  color: #94a3b8;
}

.totals {
  display: flex;
  justify-content: space-between;
  margin-top: 12px;
  color: #94a3b8;
}

.alerts {
  display: grid;
  grid-template-columns: 1fr 1fr;
  gap: 8px;
}

.alert {
  display: flex;
  flex-direction: column;
  align-items: center;
  padding: 12px;
  border-radius: 4px;
}

.red {
  color: #f43f5e;
  background: #fff1f2;
}

.red strong {
  color: #e11d48;
}

.amber {
  color: #f59e0b;
  background: #fffbeb;
}

.amber strong {
  color: #d97706;
}

.blue {
  color: #3b82f6;
  background: #eff6ff;
}

.blue strong {
  color: #2563eb;
}

.gray {
  color: #64748b;
  background: #f1f5f9;
}

.gray strong {
  color: #475569;
}

.more {
  display: block;
  margin-top: 12px;
  text-align: center;
  color: #4a80d4;
}

.rank {
  display: flex;
  justify-content: space-between;
  color: #475569;
}

.rank b {
  font-weight: 600;
  color: #94a3b8;
}

.rank em {
  font-style: normal;
  color: #334155;
}

.track {
  height: 6px;
  margin-top: 4px;
  border-radius: 3px;
  background: #f1f5f9;
}

.fill {
  height: 100%;
  border-radius: 3px;
  background: #70a1e7;
}

.shortcuts {
  display: grid;
  grid-template-columns: repeat(3, 1fr);
  gap: 8px;
  font-size: 14px;
  line-height: 20px;
}

.shortcuts a {
  padding: 8px 12px;
  border: 1px solid #cbd5e1;
  border-radius: 4px;
}

.license {
  display: flex;
  align-items: center;
  gap: 8px;
  color: #64748b;
}

.badge {
  padding: 2px 8px;
  border-radius: 4px;
  color: #3b6fc4;
  background: #e8f1fd;
}

.license-text {
  margin-top: 8px;
  font-size: 14px;
  line-height: 20px;
  color: #475569;
}

.license-note {
  margin-top: 4px;
  color: #94a3b8;
}

/* Taskbar */
.taskbar {
  display: flex;
  flex: none;
  height: 40px;
  color: #111;
  background: #ededed;
}

.start {
  display: flex;
  justify-content: center;
  align-items: center;
  width: 48px;
}

.search {
  display: flex;
  align-items: center;
  gap: 11px;
  width: 288px;
  padding-left: 11px;
  background: #fff;
  border: 1px solid #c4c4c4;
}

.search input {
  width: 200px;
}

.search input::placeholder {
  color: #222;
}

.tasks {
  display: flex;
  gap: 1px;
  padding-left: 3px;
}

.tasks button {
  display: flex;
  justify-content: center;
  align-items: center;
  position: relative;
  width: 48px;
}

.tasks svg {
  width: 24px;
  height: 24px;
}

.tasks .running::after {
  content: "";
  position: absolute;
  left: 4px;
  right: 4px;
  bottom: 0;
  height: 2px;
  background: #00b7c3;
}

.tasks .current {
  background: #f8f8f8;
}

.tasks .current::after {
  left: 0;
  right: 0;
}

.tray {
  display: flex;
  align-items: center;
  margin-left: auto;
  margin-right: 4px;
  border-right: 1px solid #bbb;
}

.tray button {
  display: flex;
  justify-content: center;
  align-items: center;
  width: 28px;
  height: 40px;
  fill: none;
  stroke: #111;
  stroke-width: 1.4;
}

.tray .keyboard {
  width: 32px;
}

.tray .lang {
  width: 26px;
  font-size: 16px;
}

.tray .ime {
  width: 16px;
  height: 16px;
  margin: 0 9px;
  font-size: 13px;
  border: 1px solid #666;
}

.tray .clock {
  width: 76px;
  font-size: 12px;
  line-height: 19px;
}

.tray .notice {
  position: relative;
  width: 48px;
}

.notice span {
  position: absolute;
  right: 11px;
  bottom: 4px;
  width: 17px;
  height: 17px;
  font-size: 12px;
  font-weight: 600;
  line-height: 15px;
  border: 1px solid #888;
  border-radius: 50%;
  background: #d6d6d6;
}
```
